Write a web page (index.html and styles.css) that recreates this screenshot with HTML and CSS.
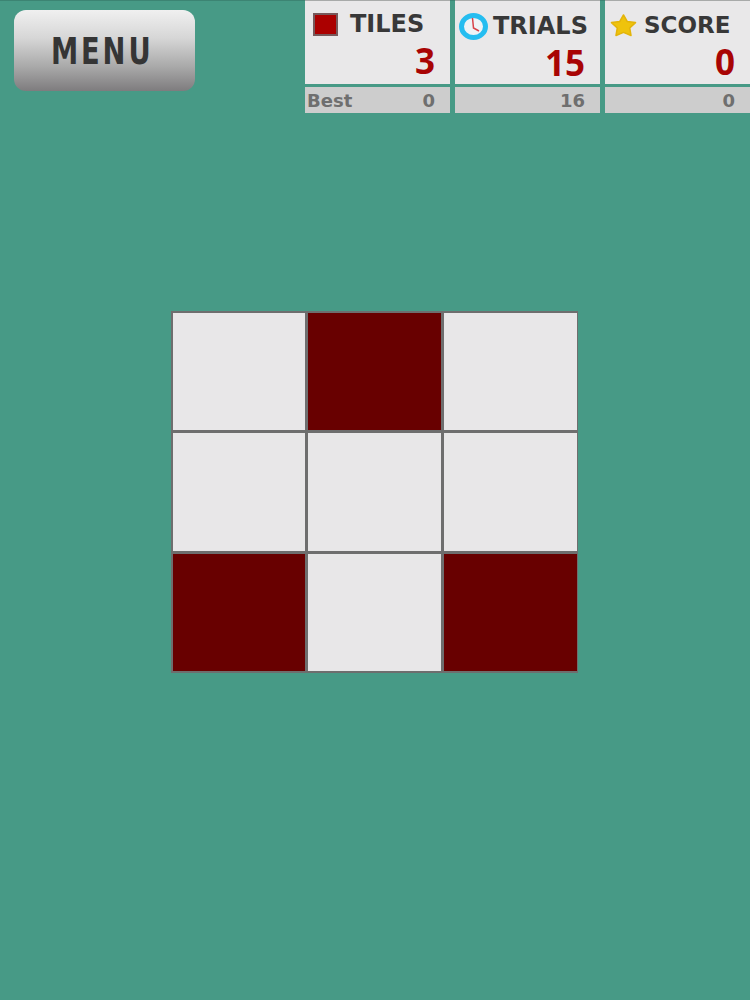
FILE: index.html
```html
<!DOCTYPE html>
<html lang="en">
<head>
    <meta charset="UTF-8">
    <title>Memory Tiles</title>
    <link rel="stylesheet" href="styles.css">
</head>
<body>
    <div class="header">
        <button class="menu-btn"><span class="menu-label">MENU</span></button>
        <div class="stats">
            <div class="stat">
                <div class="stat-card">
                    <div class="stat-title stat-title-tiles">
                        <span class="tile-icon"></span>
                        <span>TILES</span>
                    </div>
                    <div class="stat-value">3</div>
                </div>
                <div class="stat-best"><span>Best</span><span>0</span></div>
            </div>
            <div class="stat">
                <div class="stat-card">
                    <div class="stat-title stat-title-trials">
                        <svg class="icon" width="29" height="27" viewBox="0 0 29 27">
                            <ellipse cx="14.5" cy="13.5" rx="12" ry="11" fill="#eef3f6" stroke="#25bdf0" stroke-width="5"/>
                            <path d="M13.5 5 L14.5 15 L20 18" fill="none" stroke="#d8434a" stroke-width="1.5"/>
                        </svg>
                        <span>TRIALS</span>
                    </div>
                    <div class="stat-value">15</div>
                </div>
                <div class="stat-best"><span></span><span>16</span></div>
            </div>
            <div class="stat">
                <div class="stat-card">
                    <div class="stat-title stat-title-score">
                        <svg class="icon" width="27" height="23" viewBox="0 0 27 23">
                            <path d="M13.5 1 L17.2 7.4 L25.5 8.6 L19.7 14 L21 21.5 L13.5 18.4 L6 21.5 L7.3 14 L1.5 8.6 L9.8 7.4 Z" fill="#efc30c" stroke="#e3b40a" stroke-width="1.5" stroke-linejoin="round"/>
                        </svg>
                        <span>SCORE</span>
                    </div>
                    <div class="stat-value">0</div>
                </div>
                <div class="stat-best"><span></span><span>0</span></div>
            </div>
        </div>
    </div>

    <div class="board">
        <div class="tile"></div>
        <div class="tile tile-on"></div>
        <div class="tile"></div>
        <div class="tile"></div>
        <div class="tile"></div>
        <div class="tile"></div>
        <div class="tile tile-on"></div>
        <div class="tile"></div>
        <div class="tile tile-on"></div>
    </div>
</body>
</html>
```
FILE: styles.css
```css
html, body {
    height: 100%;
}
body {
    margin: 0;
    background-color: #479a86;
    box-shadow: inset 0 1px 0 #3c8473;
    font-family: "DejaVu Sans", sans-serif;
    overflow: hidden;
}
.header {
    display: flex;
    justify-content: space-between;
    align-items: flex-start;
    height: 113px;
}
.menu-btn {
    width: 181px;
    height: 81px;
    margin: 10px 0 0 14px;
    padding: 0 5px 0 0;
    border: none;
    border-radius: 12px;
    background: linear-gradient(#f0f0f0 0%, #d6d6d6 35%, #a9a9a9 70%, #7e7c7e 100%);
    color: #353535;
    font-family: "DejaVu Sans", sans-serif;
    font-size: 38px;
    font-weight: 700;
    letter-spacing: 4px;
}
.menu-label {
    display: inline-block;
    transform: scaleX(0.72);
}
.stats {
    display: flex;
    gap: 5px;
}
.stat {
    width: 145px;
    display: flex;
    flex-direction: column;
    gap: 3px;
}
.stat-card {
    height: 84px;
    box-sizing: border-box;
    background-color: #e9e8e9;
    border-top: 1px solid #a8aaa9;
    padding: 0 15px 0 8px;
}
.stat-title {
    display: flex;
    align-items: center;
    height: 46px;
    margin-right: -15px;
    color: #383838;
    font-size: 23px;
    font-weight: 700;
}
.icon {
    flex-shrink: 0;
}
.stat-title-tiles {
    gap: 12px;
    font-size: 24px;
}
.stat-title-trials {
    gap: 5px;
    margin-left: -4px;
    padding-top: 2px;
    font-size: 24px;
}
.stat-title-score {
    gap: 7px;
    margin-left: -3px;
    padding-top: 1px;
}
.tile-icon {
    width: 25px;
    height: 23px;
    box-sizing: border-box;
    background-color: #ab0000;
    border: 2px solid #77595b;
}
.stat-value {
    margin-top: -6px;
    text-align: right;
    color: #a80404;
    font-family: "Noto Sans", sans-serif;
    font-size: 35px;
    font-weight: 700;
    line-height: 40px;
}
.stat-best {
    display: flex;
    justify-content: space-between;
    align-items: center;
    height: 26px;
    padding: 0 15px 0 2px;
    background-color: #cdcdcd;
    color: #6f6f6f;
    font-size: 18px;
    font-weight: 700;
}
.board {
    display: grid;
    grid-template-columns: 132px 133px 133px;
    grid-template-rows: 117px 118px 117px;
    gap: 3px;
    width: 404px;
    margin: 198px 0 0 171px;
    padding: 2px 1px 2px 2px;
    background-color: #6e6e6e;
}
.tile {
    background-color: #e8e7e8;
}
.tile-on {
    background-color: #680000;
}
```
